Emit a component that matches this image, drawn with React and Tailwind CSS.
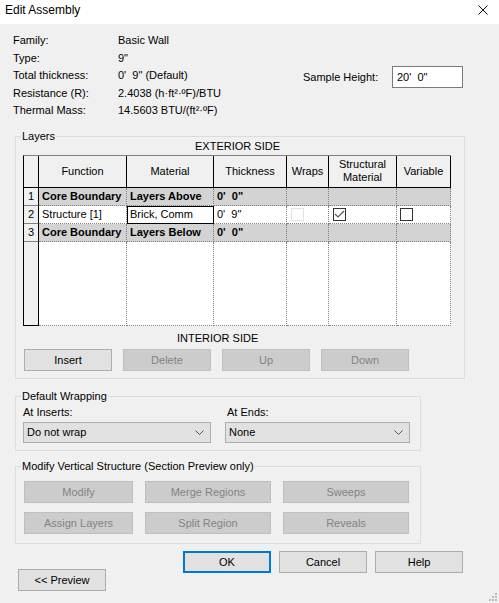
import React from "react";

const cols = "grid-cols-[15px_88px_87px_73px_42px_68px_54px]";

const Btn = ({ label, disabled, w = "w-[88px]", h = "h-[22px]", primary }) => (
  <div
    className={`${w} ${h} flex items-center justify-center text-[11px] ${
      primary
        ? "border-2 border-[#0078d7] bg-[#e1e1e1] text-black"
        : disabled
        ? "border border-[#bfbfbf] bg-[#cccccc] text-[#838383]"
        : "border border-[#adadad] bg-[#e1e1e1] text-black"
    }`}
  >
    {label}
  </div>
);

const Group = ({ title, className, children }) => (
  <div className={`relative ml-[15px] border border-[#dcdcdc] ${className}`}>
    <span className="absolute -top-[8px] left-[5px] bg-[#f0f0f0] px-[1px] text-[11px] leading-[14px]">
      {title}
    </span>
    {children}
  </div>
);

const Select = ({ value, w }) => (
  <div className={`${w} h-[21px] flex items-center justify-between border border-[#adadad] bg-[#e1e1e1] pl-[3px] pr-[6px] text-[11px]`}>
    <span>{value}</span>
    <svg width="9" height="5" viewBox="0 0 9 5">
      <polyline points="0.5,0.5 4.5,4.5 8.5,0.5" fill="none" stroke="#555" strokeWidth="1" />
    </svg>
  </div>
);

const Check = ({ checked, bare }) => (
  <div
    className={`w-[13px] h-[13px] bg-white border ${bare ? "border-[#e3e3e3]" : "border-[#333]"} flex items-center justify-center`}
  >
    {checked && (
      <svg width="11" height="11" viewBox="0 0 11 11">
        <polyline points="1,5 4,8 10,2" fill="none" stroke="#555" strokeWidth="1.2" />
      </svg>
    )}
  </div>
);

const info = [
  ["Family:", "Basic Wall"],
  ["Type:", '9"'],
  ["Total thickness:", "0'  9\" (Default)"],
  ["Resistance (R):", "2.4038 (h·ft²·ºF)/BTU"],
  ["Thermal Mass:", "14.5603 BTU/(ft²·ºF)"],
];

const hd = "border-r border-b border-black bg-[#f0f0f0] flex items-center justify-center text-center leading-[13px]";
const num = "border-r border-b border-r-black border-b-[#808080] border-b-dotted bg-[#f0f0f0] pl-[4px] flex items-center";
const cell = "border-r border-b border-dotted border-[#808080] flex items-center pl-[3px] whitespace-nowrap overflow-hidden";

const Row = ({ n, gray, bold, fn, mat, th, checks }) => {
  const bg = gray ? "bg-[#d3d3d3]" : "bg-white";
  const fw = bold ? "font-bold" : "";
  return (
    <>
      <div className={num}>{n}</div>
      <div className={`${cell} ${bg} ${fw}`}>{fn}</div>
      <div className={`${cell} ${bg} ${fw} ${gray ? "" : "outline outline-1 outline-black -outline-offset-1"}`}>{mat}</div>
      <div className={`${cell} ${bg} ${fw}`}>{th}</div>
      <div className={`${cell} ${bg} pl-[4px]`}>{checks && <Check bare />}</div>
      <div className={`${cell} ${bg} pl-[4px]`}>{checks && <Check checked />}</div>
      <div className={`${cell} ${bg}`}>{checks && <Check />}</div>
    </>
  );
};

export default function App() {
  return (
    <div className="relative w-[499px] h-[603px] bg-[#f0f0f0] text-black text-[11px] [font-family:'Liberation_Sans',Arial,sans-serif] flex flex-col overflow-hidden">
      {/* Title bar */}
      <div className="h-[24px] bg-white flex items-start justify-between pl-[5px] pr-[11px] pt-[2px]">
        <span className="text-[12px] leading-[16px]">Edit Assembly</span>
        <svg width="10" height="10" viewBox="0 0 10 10" className="mt-[3px]">
          <path d="M0.5 0.5 L9.5 9.5 M9.5 0.5 L0.5 9.5" stroke="#111" strokeWidth="1" />
        </svg>
      </div>

      {/* Info */}
      <div className="flex pl-[13px] pt-[8px]">
        <div className="w-[290px] flex flex-col">
          {info.map(([k, v]) => (
            <div key={k} className="flex h-[17.6px] leading-[17.6px]">
              <span className="w-[105px]">{k}</span>
              <span className="whitespace-pre">{v}</span>
            </div>
          ))}
        </div>
        <div className="flex items-center mt-[34px] h-[22px]">
          <span className="w-[89px]">Sample Height:</span>
          <div className="w-[71px] h-[22px] border border-[#7a7a7a] bg-white pl-[4px] leading-[20px] whitespace-pre">
            20'  0"
          </div>
        </div>
      </div>

      {/* Layers */}
      <Group title="Layers" className="mt-[16px] w-[450px] h-[243px]">
        <div className="ml-[7px] w-[429px] mt-[2px] text-center leading-[14px]">EXTERIOR SIDE</div>
        <div className="ml-[7px] mt-[2px] w-[428px] border-t border-t-[#808080] border-l border-l-black">
          <div className={`grid ${cols} grid-rows-[32px_18px_18px_18px_84px]`}>
            <div className={hd}></div>
            <div className={hd}>Function</div>
            <div className={hd}>Material</div>
            <div className={hd}>Thickness</div>
            <div className={hd}>Wraps</div>
            <div className={hd}>
              Structural
              <br />
              Material
            </div>
            <div className={hd}>Variable</div>

            <Row n="1" gray bold fn="Core Boundary" mat="Layers Above" th={<span className="whitespace-pre">0'  0"</span>} />
            <Row n="2" fn="Structure [1]" mat="Brick, Comm" th={<span className="whitespace-pre">0'  9"</span>} checks />
            <Row n="3" gray bold fn="Core Boundary" mat="Layers Below" th={<span className="whitespace-pre">0'  0"</span>} />

            <div className="border-r border-b border-black bg-[#f0f0f0]"></div>
            <div className={`${cell} bg-white`}></div>
            <div className={`${cell} bg-white`}></div>
            <div className={`${cell} bg-white`}></div>
            <div className={`${cell} bg-white`}></div>
            <div className={`${cell} bg-white`}></div>
            <div className={`${cell} bg-white`}></div>
          </div>
        </div>
        <div className="ml-[161px] mt-[5px] leading-[14px]">INTERIOR SIDE</div>
        <div className="flex gap-[11px] ml-[8px] mt-[4px]">
          <Btn label="Insert" />
          <Btn label="Delete" disabled />
          <Btn label="Up" disabled />
          <Btn label="Down" disabled />
        </div>
      </Group>

      {/* Default Wrapping */}
      <Group title="Default Wrapping" className="mt-[17px] w-[406px] h-[55px]">
        <div className="flex gap-[14px] ml-[7px] mt-[8px]">
          <div className="flex flex-col">
            <span className="leading-[14px]">At Inserts:</span>
            <div className="mt-[3px]">
              <Select value="Do not wrap" w="w-[188px]" />
            </div>
          </div>
          <div className="flex flex-col">
            <span className="leading-[14px] pl-[2px]">At Ends:</span>
            <div className="mt-[3px]">
              <Select value="None" w="w-[185px]" />
            </div>
          </div>
        </div>
      </Group>

      {/* Modify Vertical Structure */}
      <Group title="Modify Vertical Structure (Section Preview only)" className="mt-[15px] w-[406px] h-[78px]">
        <div className="flex gap-[12px] ml-[8px] mt-[14px]">
          <Btn label="Modify" disabled w="w-[109px]" />
          <Btn label="Merge Regions" disabled w="w-[126px]" />
          <Btn label="Sweeps" disabled w="w-[126px]" />
        </div>
        <div className="flex gap-[12px] ml-[8px] mt-[9px]">
          <Btn label="Assign Layers" disabled w="w-[109px]" />
          <Btn label="Split Region" disabled w="w-[126px]" />
          <Btn label="Reveals" disabled w="w-[126px]" />
        </div>
      </Group>

      {/* Footer */}
      <div className="flex items-start mt-[7px]">
        <div className="ml-[18px] mt-[18px]">
          <Btn label="<< Preview" />
        </div>
        <div className="ml-[77px] flex gap-[8px]">
          <Btn label="OK" primary />
          <Btn label="Cancel" />
          <Btn label="Help" />
        </div>
      </div>

      {/* Resize grip */}
      <svg width="10" height="10" viewBox="0 0 10 10" className="absolute right-[1px] bottom-[1px]">
        <rect x="7" y="1" width="2" height="2" fill="#bcbcbc" />
        <rect x="4" y="4" width="2" height="2" fill="#bcbcbc" />
        <rect x="7" y="4" width="2" height="2" fill="#bcbcbc" />
        <rect x="1" y="7" width="2" height="2" fill="#bcbcbc" />
        <rect x="4" y="7" width="2" height="2" fill="#bcbcbc" />
        <rect x="7" y="7" width="2" height="2" fill="#bcbcbc" />
      </svg>
    </div>
  );
}
